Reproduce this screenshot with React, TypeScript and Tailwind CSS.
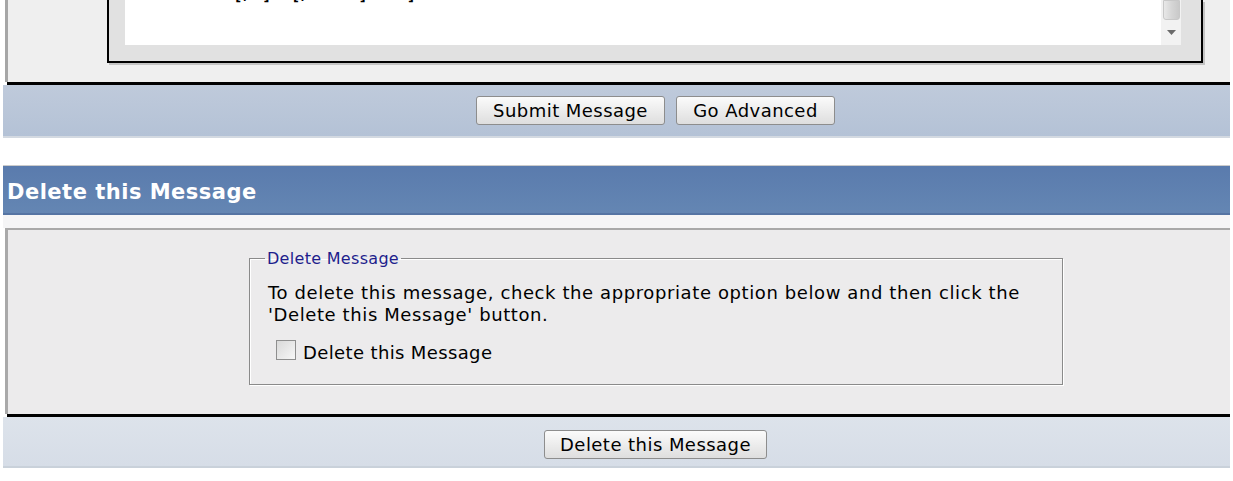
import React from 'react'

function Btn({ label, className }: { label: string; className: string }) {
  return (
    <button
      type="button"
      className={`h-[29px] rounded-[3px] border border-[#8d8d8d] bg-gradient-to-b from-[#fbfbfb] to-[#dedede] text-[18px] leading-none tracking-[0.45px] text-black ${className}`}
    >
      {label}
    </button>
  )
}

export default function App() {
  return (
    <div className="h-[481px] w-[1233px] overflow-hidden bg-white font-['DejaVu_Sans',sans-serif] text-black">
      <div className="ml-[3px] w-[1227px]">
        {/* reply box, scrolled off the top */}
        <div className="ml-[2px] flex h-[82px] border-l-[3px] border-[#a6a6a6] bg-[#efefef]">
          <div className="ml-[99px] h-[63px] w-[1096px] border-x-2 border-b-2 border-black bg-[#e1e1e1] pb-[16px] pl-[16px] pr-[20px] shadow-[2px_2px_0_#c4c4c4]">
            <div className="relative flex h-[45px] overflow-hidden bg-white">
              <div className="-mt-[13px] flex-1 pl-[108px] font-['DejaVu_Sans_Mono',monospace] text-[16px] font-bold leading-[16px]">
                [/I]&nbsp;&nbsp;[/COLOR]&nbsp;&nbsp;&nbsp;&nbsp;]
              </div>
              <div className="flex w-[20px] flex-col bg-[#f2f2f2]">
                <div className="mx-auto h-[20px] w-[17px] rounded-b-[3px] border border-[#c8c8c8] bg-gradient-to-r from-[#e8e8e8] via-[#d6d6d6] to-[#c9c9c9]" />
                <div className="flex flex-1 items-center justify-center">
                  <svg width="9" height="5" viewBox="0 0 9 5">
                    <path d="M0 0 L9 0 L4.5 5 Z" fill="#6b6b6b" />
                  </svg>
                </div>
              </div>
            </div>
          </div>
        </div>
        <div className="ml-[4px] h-[3px] bg-black" />
        <div className="flex h-[53px] items-center justify-center gap-[11px] border-b-2 border-[#d3d9e1] bg-gradient-to-b from-[#bfcadb] to-[#b4c2d6] pl-[78px]">
          <Btn label="Submit Message" className="w-[189px]" />
          <Btn label="Go Advanced" className="w-[159px]" />
        </div>
        <div className="h-[27px] bg-white" />

        {/* delete section */}
        <div className="border-t border-[#cbcbcb]">
          <div className="flex h-[49px] items-center border-b-2 border-[#5574a3] bg-gradient-to-b from-[#5a7bad] to-[#6486b3] pl-[4px] pt-[6px] text-[21px] font-bold tracking-[0.5px] text-white">
            Delete this Message
          </div>
          <div className="h-[13px] bg-[#f5f5f6]" />
          <div className="ml-[2px] border-l-[3px] border-t-2 border-[#a9a9a9] bg-[#ecebec] pb-[29px] pt-[19px]">
            <fieldset className="ml-[241px] w-[814px] border border-[#8a8a8a] pb-[22px] pl-[18px] pt-[15px] shadow-[1px_1px_0_#fff,inset_1px_1px_0_#fff]">
              <legend className="ml-[-3px] px-[2px] text-[16px] leading-[18px] tracking-[0.3px] text-[#1e1e8c]">
                <span className="relative top-[1px]">Delete Message</span>
              </legend>
              <p className="text-[18px] leading-[22px] tracking-[0.6px]">
                To delete this message, check the appropriate option below and then click the
                <br />
                'Delete this Message' button.
              </p>
              <label className="mt-[12px] flex h-[24px] items-center gap-[7px] pl-[8px] text-[18px] leading-[24px] tracking-[0.37px]">
                <span className="block h-[20px] w-[20px] border border-[#8e8e8e] bg-gradient-to-br from-[#d9d9d9] to-[#f7f7f7]" />
                <span className="relative top-[3px]">Delete this Message</span>
              </label>
            </fieldset>
          </div>
          <div className="ml-[4px] h-[3px] bg-black" />
          <div className="flex h-[51px] items-start justify-center border-b-2 border-[#c9d1da] bg-gradient-to-b from-[#dde3eb] to-[#d6dde7] pl-[78px] pt-[13px]">
            <Btn label="Delete this Message" className="w-[223px]" />
          </div>
        </div>
      </div>
    </div>
  )
}
